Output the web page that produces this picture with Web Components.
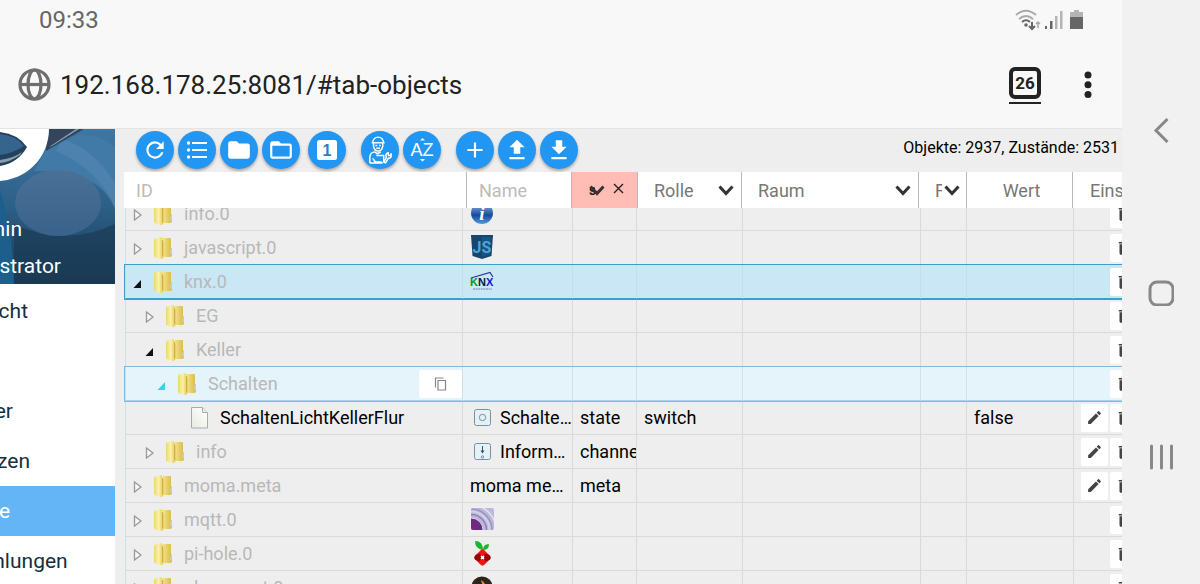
<!DOCTYPE html>
<html lang="de">
<head>
<meta charset="utf-8">
<meta name="viewport" content="width=device-width, initial-scale=1">
<title>ioBroker – Objekte</title>
<style>
  html, body { height: 100%; }
  body { margin: 0; overflow: hidden; background: #f8f8f8; font-family: Roboto, "Liberation Sans", sans-serif; }
</style>
</head>
<body>
<phone-screen>
  <status-bar slot="top" time="09:33"></status-bar>
  <address-bar slot="top" url="192.168.178.25:8081/#tab-objects" tabs="26"></address-bar>
  <side-drawer slot="drawer">
    <drawer-item href="#tab-info">Info</drawer-item>
  </side-drawer>
  <objects-panel></objects-panel>
  <nav-rail slot="nav"></nav-rail>
</phone-screen>

<script>
const define = (name, html, ready) => {
  const tpl = document.createElement('template');
  tpl.innerHTML = html;
  customElements.define(name, class extends HTMLElement {
    connectedCallback() {
      if (this.shadowRoot) return;
      this.attachShadow({ mode: 'open' }).append(tpl.content.cloneNode(true));
      if (ready) ready(this, this.shadowRoot);
    }
  });
};

/* ---------- frame ---------- */
define('phone-screen', `
<style>
  :host { display: grid; grid-template-columns: minmax(0, 1fr) 78px; height: 100vh; }
  main { display: flex; flex-direction: column; min-width: 0; min-height: 0; }
  .app { flex: 1; display: grid; grid-template-columns: 115px minmax(0, 1fr); gap: 9px; min-height: 0; background: #eee; border-top: 1px solid #e4e4e4; }
</style>
<main><slot name="top"></slot><div class="app"><slot name="drawer"></slot><slot></slot></div></main>
<slot name="nav"></slot>`);

define('status-bar', `
<style>
  :host { display: flex; justify-content: space-between; align-items: center; height: 40px; padding: 0 33px 0 39px; color: #666; font-size: 24px; }
  .icons { display: flex; gap: 4px; }
</style>
<span id="time"></span>
<span class="icons">
  <svg width="26" height="22" viewBox="0 0 26 22" fill="none" stroke-width="2">
    <path d="M1 6q10-8.500 20 0" stroke="#aaa"/><path d="M4 10q7-6 14 0" stroke="#aaa"/><path d="M7 13q4-3.500 8 0" stroke="#666"/>
    <circle cx="11" cy="16" r="1.800" fill="#666"/>
    <path d="M17 13v6m-3-2l3 3 3-3" stroke="#666"/><path d="M23 19v-6m-2 2l2-2 2 2" stroke="#aaa" stroke-width="1.500"/>
  </svg>
  <svg width="18" height="22" viewBox="0 0 18 22"><path d="M0 17h2v3H0zM5 12h2.500v8H5z" fill="#666"/><path d="M10 7h2.500v13H10zM15 2h2.500v18H15z" fill="#b4b4b4"/></svg>
  <svg width="22" height="22" viewBox="0 0 22 22"><path d="M7 1h5v2h4v6H3V3h4z" fill="#b4b4b4"/><path d="M3 8h13v12H3z" fill="#666"/></svg>
</span>`, (el, root) => { root.getElementById('time').textContent = el.getAttribute('time'); });

define('address-bar', `
<style>
  :host { display: flex; align-items: center; box-sizing: border-box; height: 88px; padding: 2px 26px 0 18px; gap: 9px; }
  svg, button { flex: none; }
  input { flex: 1; min-width: 0; border: 0; padding: 0; background: none; outline: 0; font: 26px Roboto, sans-serif; color: #222; }
  button { border: 0; background: none; padding: 0; display: grid; place-items: center; color: #222; }
  .tabs { width: 32px; height: 37px; margin-right: 30px; align-content: start; border-bottom: 2px solid #222; box-sizing: border-box; }
  .tabs span { box-sizing: border-box; width: 32px; height: 32px; border: 4px solid #222; border-radius: 6px; font: bold 17px/24px Roboto, sans-serif; text-align: center; }
</style>
<svg width="33" height="34" viewBox="0 0 33 34" fill="none" stroke="#6e6e6e" stroke-width="3.200"><circle cx="16.500" cy="16.500" r="14.500"/><ellipse cx="16.500" cy="16.500" rx="6.500" ry="14.500"/><path d="M2 16.500h29"/></svg>
<input id="url" aria-label="Adresse">
<button class="tabs" aria-label="Tabs"><span id="tabs"></span></button>
<button aria-label="Menü"><svg width="16" height="28" viewBox="0 0 16 28" fill="#222"><circle cx="8" cy="4" r="3.500"/><circle cx="8" cy="13.700" r="3.500"/><circle cx="8" cy="23.400" r="3.500"/></svg></button>`,
(el, root) => {
  root.getElementById('url').value = el.getAttribute('url');
  root.getElementById('tabs').textContent = el.getAttribute('tabs');
});

define('nav-rail', `
<style>
  :host { display: flex; flex-direction: column; justify-content: space-between; align-items: center; padding: 20vh 0 114px; background: #f1f1f1; }
  button { border: 0; padding: 0; background: none; display: block; }
  svg { display: block; }
</style>
<button aria-label="Zurück"><svg width="26" height="26" viewBox="0 0 26 26" fill="none" stroke="#888" stroke-width="3"><path d="M19.500 2L8 13.500l11.500 11.500"/></svg></button>
<button aria-label="Start"><svg width="26" height="26" viewBox="0 0 26 26" fill="none" stroke="#888" stroke-width="3"><rect x="2" y="2" width="23" height="23" rx="7"/></svg></button>
<button aria-label="Übersicht"><svg width="26" height="26" viewBox="0 0 26 26" stroke="#888" stroke-width="3" stroke-linecap="round"><path d="M3.500 2v22M13.500 2v22M23.500 2v22"/></svg></button>`);

/* ---------- drawer ---------- */
define('drawer-item', `
<style>
  :host { display: block; }
  a { display: block; padding-left: 84px; font-size: 21px; line-height: 50px; color: #123042; text-decoration: none; }
  :host([active]) a { background: #64b5f6; color: #fff; }
</style>
<a><slot></slot></a>`, (el, root) => { root.querySelector('a').href = el.getAttribute('href'); });

define('side-drawer', `
<style>
  :host { display: flex; justify-content: flex-end; overflow: hidden; background: #fff; }
  .drawer { flex: none; width: 260px; }
  .user { display: grid; justify-items: end; height: 155px; margin-bottom: 2px; background: #174a72; color: #fff; font-size: 21px; }
  .user > * { grid-area: 1 / 1; }
  .user div { align-self: end; padding-bottom: 5px; text-align: right; }
  p { margin: 0; line-height: 25px; padding: 0 54px 0 0; }
  p.name { padding: 0 93px 12px 0; }
</style>
<div class="drawer">
  <div class="user">
    <svg width="115" height="155" viewBox="0 0 115 155" aria-hidden="true">
      <defs>
        <linearGradient id="bg" x1="0" y1="0" x2="0" y2="1"><stop offset="0" stop-color="#3f77a4"/><stop offset=".5" stop-color="#2c6088"/><stop offset="1" stop-color="#193850"/></linearGradient>
        <linearGradient id="disc" x1="0" y1="0" x2="0" y2="1"><stop offset="0" stop-color="#4a7096"/><stop offset="1" stop-color="#3a628a"/></linearGradient>
      </defs>
      <rect width="115" height="155" fill="url(#bg)"/>
      <path d="M50 14Q90-4 115 18V80Q100 40 34 42z" fill="#427aa7"/>
      <path d="M62 10q30 8 53 44v24Q98 40 56 22z" fill="#4c82ad"/>
      <path d="M46 22L84 0H48z" fill="#33455c"/><path d="M49 18L76 0h3L52 17z" fill="#86a2bb"/>
      <path d="M0 60q14 50 14 95H0z" fill="#1c5f8c"/>
      <path d="M14 95q50 24 101 0v60H14z" fill="#1b3b55" opacity=".7"/>
      <ellipse cx="58" cy="74" rx="43" ry="33" fill="url(#disc)"/>
      <circle cx="-3" cy="0" r="52" fill="#fff"/>
      <path d="M0 3q18 2 27 15Q18 34 0 37z" fill="#23415c"/><path d="M0 5q15 1 24 12Q14 24 0 26z" fill="#35648d"/><path d="M0 31q14-2 22-8l-2 3Q10 33 0 34z" fill="#8a9cab"/>
    </svg>
    <div><p class="name">Admin</p><p>Administrator</p></div>
  </div>
  <nav>
    <drawer-item href="#tab-intro">Übersicht</drawer-item>
    <slot></slot>
    <drawer-item href="#tab-adapters">Adapter</drawer-item>
    <drawer-item href="#tab-instances">Instanzen</drawer-item>
    <drawer-item href="#tab-objects" active>Objekte</drawer-item>
    <drawer-item href="#tab-enums">Aufzählungen</drawer-item>
  </nav>
</div>`);

/* ---------- toolbar ---------- */
define('round-button', `
<style>
  :host { display: block; }
  button { display: grid; place-items: center; width: 38px; height: 38px; padding: 0; border: 0; border-radius: 50%; background: #2196f3; box-shadow: 0 2px 3px rgba(90, 50, 40, .4); }
</style>
<button><slot></slot></button>`, (el, root) => { root.querySelector('button').setAttribute('aria-label', el.getAttribute('label')); });

define('objects-toolbar', `
<style>
  :host { display: flex; align-items: flex-start; justify-content: space-between; height: 41px; padding: 2px 3px 0 12px; }
  .buttons { display: flex; gap: 15px; }
  .group { display: flex; gap: 4px; }
  .group .apart { margin-left: 4px; }
  svg { display: block; }
  .count { font-size: 16px; line-height: 34px; color: #000; white-space: nowrap; }
</style>
<div class="buttons">
  <div class="group">
    <round-button label="Aktualisieren"><svg width="26" height="26" viewBox="0 0 24 24" fill="#fff"><path d="M17.650 6.350A7.960 7.960 0 0 0 12 4a8 8 0 1 0 7.730 10h-2.080A6 6 0 1 1 12 6c1.660 0 3.140.690 4.220 1.780L13 11h7V4z"/></svg></round-button>
    <round-button label="Liste"><svg width="24" height="20" viewBox="0 0 24 20" fill="#fff"><path d="M7 2h15v2H7zM7 9h15v2H7zM7 16h15v2H7z"/><circle cx="3.500" cy="3" r="1.700"/><circle cx="3.500" cy="10" r="1.700"/><circle cx="3.500" cy="17" r="1.700"/></svg></round-button>
    <round-button label="Zuklappen"><svg width="26" height="26" viewBox="0 0 24 24" fill="#fff"><path d="M10 4H4a2 2 0 0 0-2 2v12c0 1.100.9 2 2 2h16a2 2 0 0 0 2-2V8a2 2 0 0 0-2-2h-8z"/></svg></round-button>
    <round-button label="Aufklappen"><svg width="26" height="26" viewBox="0 0 24 24" fill="#fff"><path d="M20 6h-8l-2-2H4a2 2 0 0 0-2 2v12c0 1.100.9 2 2 2h16a2 2 0 0 0 2-2V8a2 2 0 0 0-2-2zm0 12H4V8h16z"/></svg></round-button>
    <round-button class="apart" label="Eine Ebene"><svg width="20" height="20" viewBox="0 0 20 20"><rect width="20" height="20" rx="2.500" fill="#fff"/><text x="10" y="15.500" text-anchor="middle" font-size="16" font-weight="700" fill="#2a7fc4">1</text></svg></round-button>
  </div>
  <div class="group">
    <round-button label="Expertenmodus"><svg width="24" height="29" viewBox="0 0 26 31" fill="none" stroke="#fff" stroke-width="1.600" stroke-linejoin="round"><path d="M5 7q1-6 6-6t6 6M4 7h14M6 7v4q1 5 5 5t5-5V7"/><path d="M8 10h2m2 0h2M9 13h4M2 29v-6q0-5 5-6l3 2 4-2M2 29h14M9 21h8v7M5 24l3 4h7"/><path d="M17 28l3-5q-2-4 2-5v3h2l1-2q1 5-3 5l-3 5z"/></svg></round-button>
    <round-button label="Sortieren"><svg width="26" height="26" viewBox="0 0 26 26" fill="#fff"><text x="13" y="19" text-anchor="middle" font-size="18">AZ</text><path d="M11 3.500h5L13.500 1zM11 22h5l-2.500 2.500z"/></svg></round-button>
  </div>
  <div class="group">
    <round-button label="Neu"><svg width="26" height="26" viewBox="0 0 24 24" fill="#fff"><path d="M19 13h-6v6h-2v-6H5v-2h6V5h2v6h6z"/></svg></round-button>
    <round-button label="Hochladen"><svg width="26" height="26" viewBox="0 0 24 24" fill="#fff"><path d="M9 15.500h6v-6h4l-7-7-7 7h4zM5 18.500h14v2H5z"/></svg></round-button>
    <round-button label="Herunterladen"><svg width="26" height="26" viewBox="0 0 24 24" fill="#fff"><path d="M19 9h-4V3H9v6H5l7 7zM5 18.500v2h14v-2z"/></svg></round-button>
  </div>
</div>
<span class="count">Objekte: 2937, Zustände: 2531</span>`);

/* ---------- column header ---------- */
define('filter-select', `
<style>
  :host { display: grid; align-items: center; flex: 1; min-width: 0; padding: 0 7px 0 16px; }
  select, svg { grid-area: 1 / 1; }
  select { appearance: none; width: 100%; height: 35px; padding: 0; border: 0; background: none; font: 18px Roboto, sans-serif; color: #777; overflow: hidden; text-overflow: clip; }
  svg { justify-self: end; pointer-events: none; }
  :host([compact]) { padding-right: 6px; }
  :host([compact]) select { padding-right: 18px; }
  :host([tiny]) { flex: none; width: 15px; padding: 0; }
  :host([tiny]) select { font-size: 14px; font-weight: 700; color: #222; height: 20px; padding-right: 10px; }
</style>
<select><option></option></select>
<svg width="16" height="11" viewBox="0 0 16 11" fill="none" stroke="#333" stroke-width="3"><path d="M1.500 1.500L8 8.500l6.500-7"/></svg>`,
(el, root) => {
  root.querySelector('option').textContent = el.getAttribute('value');
  root.querySelector('select').setAttribute('aria-label', el.getAttribute('label') || el.getAttribute('value'));
});

define('objects-header', `
<style>
  :host { display: grid; grid-template-columns: 343px 105px 66px 104px minmax(0, 1fr) 48px 106px 120px; height: 36px; width: calc(100% + 71px); background: #fff; color: #777; font-size: 18px; }
  .col { display: flex; align-items: center; min-width: 0; box-sizing: border-box; border-right: 1px solid #bbb; overflow: hidden; }
  input { width: 100%; border: 0; outline: 0; background: none; padding: 0 12px; font: 18px Roboto, sans-serif; }
  input::placeholder { color: #bbb; opacity: 1; }
  .active { background: #ffbdb5; gap: 6px; padding-left: 17px; }
  .active button { border: 0; background: none; padding: 0; width: 16px; height: 24px; display: grid; align-content: start; padding-top: 5px; justify-content: center; }
  .wert { justify-content: center; padding-left: 4px; }
  .last { padding-left: 17px; }
</style>
<div class="col"><input placeholder="ID" aria-label="ID"></div>
<div class="col"><input placeholder="Name" aria-label="Name"></div>
<div class="col active"><filter-select tiny value="state" label="Typ"></filter-select><button aria-label="Filter löschen"><svg width="11" height="11" viewBox="0 0 11 11" stroke="#222" stroke-width="1.400"><path d="M1 1l9 9M10 1l-9 9"/></svg></button></div>
<div class="col"><filter-select value="Rolle"></filter-select></div>
<div class="col"><filter-select value="Raum"></filter-select></div>
<div class="col"><filter-select compact value="Funktion"></filter-select></div>
<div class="col wert">Wert</div>
<div class="col last">Einstellungen</div>`);

/* ---------- object tree ---------- */
const pictures = {
  closed: `<svg width="10" height="14" viewBox="0 0 10 14" fill="#f8f8f8" stroke="#999" stroke-width="1.300"><path d="M1.500 3L8 8l-6.500 5z"/></svg>`,
  open: `<svg width="10" height="14" viewBox="0 0 10 14" fill="currentColor"><path d="M8 5v8H.5z"/></svg>`,
  folder: `<svg width="20" height="24" viewBox="0 0 20 24"><defs><linearGradient id="fl" x1="0" x2="1"><stop offset="0" stop-color="#ecd76c"/><stop offset=".5" stop-color="#fbf2ac"/><stop offset="1" stop-color="#dfc252"/></linearGradient><linearGradient id="fr" x1="0" x2="1"><stop offset="0" stop-color="#f7e78c"/><stop offset="1" stop-color="#d9b748"/></linearGradient></defs><path d="M8 3q0-1 1-1h7q1 0 1 1v9l1 1v6q0 2-2 2H8z" fill="url(#fr)"/><path d="M0 4q0-1 1-1.200L6 1q2 0 2 1v3l1.500 1v14q0 3-2.500 3-5-1-7-2.500z" fill="url(#fl)"/><path d="M8.500 4v16" stroke="#c9a640" stroke-width=".8"/><path d="M16 14l2-1v5l-2 1z" fill="#c4d4a8"/></svg>`,
  file: `<svg width="20" height="24" viewBox="0 0 20 24"><defs><linearGradient id="pg" x1="0" y1="1" x2="1" y2="0"><stop offset="0" stop-color="#e6ece0"/><stop offset="1" stop-color="#fff"/></linearGradient></defs><path d="M1.500 1.500h11l5 5v15.500h-16z" fill="url(#pg)" stroke="#aaa"/><path d="M12.500 1.500v5h5" fill="#eee" stroke="#aaa"/></svg>`,
  info: `<svg width="24" height="24" viewBox="0 0 24 24"><defs><linearGradient id="ib" x1="0" y1="0" x2="0" y2="1"><stop offset="0" stop-color="#9bc4ee"/><stop offset=".6" stop-color="#174a9a"/><stop offset="1" stop-color="#4f9ae0"/></linearGradient></defs><circle cx="12" cy="11" r="11" fill="url(#ib)"/><text x="12" y="18" text-anchor="middle" font-family="Liberation Serif" font-weight="700" font-style="italic" font-size="19" fill="#fff">i</text></svg>`,
  js: `<svg width="24" height="26" viewBox="0 0 24 26"><path d="M1 0h22l-1.500 21-9.500 3L2.500 21z" fill="#17456b"/><path d="M12 2h9l-1.500 17.500-7.500 2.500z" fill="#1c5480"/><text x="12" y="17.500" text-anchor="middle" font-weight="700" font-size="16" fill="#4aa3dc">JS</text></svg>`,
  knx: `<svg width="24" height="22" viewBox="0 0 24 22"><path d="M1 7L20 1.500 23 6" fill="none" stroke="#2233a8" stroke-width="1.200"/><g font-family="Liberation Sans" font-weight="700" font-size="11"><text x="0" y="15" fill="#0a9a10">K</text><text x="8" y="15" fill="#0d1440">N</text><text x="16" y="15" fill="#1414d0">X</text></g><path d="M3 18h19" stroke="#6a84b8" stroke-dasharray="2 .6"/></svg>`,
  mqtt: `<svg width="24" height="24" viewBox="0 0 24 24"><defs><clipPath id="mq"><rect x="1" y="0" width="23" height="22" rx="2"/></clipPath></defs><g clip-path="url(#mq)"><rect width="24" height="24" fill="#b9b9da"/><g fill="none"><circle cx="1" cy="22" r="25" stroke="#e2e0ee" stroke-width="1.500"/><circle cx="1" cy="22" r="21" stroke="#9a96c4" stroke-width="1.500"/><circle cx="1" cy="22" r="18.500" stroke="#d4d0e8" stroke-width="2"/><circle cx="1" cy="22" r="15.500" stroke="#8f83b8" stroke-width="1.500"/></g><circle cx="1" cy="22" r="12" fill="#6d2a80" stroke="#d9d4e8"/></g></svg>`,
  pihole: `<svg width="24" height="26" viewBox="0 0 24 26"><path d="M5 0q8 0 8 9Q5 8 5 0zM19 3q0 6-6 6 0-6 6-6z" fill="#18b82c"/><rect x="6" y="10" width="13" height="13" rx="3" transform="rotate(45 12.500 16.500)" fill="#f01414"/><path d="M12.500 16.500l3.500-4 4 2q1 2 0 4l-4 2zM12.500 16.500l-3.500-4-4 2q-1 2 0 4l4 2z" fill="#960404"/><path d="M11 15l1.500.5 1.500-.5-.5 1.500.5 1.500-1.500-.5-1.500.5.5-1.500z" fill="#fff" stroke="#fff"/></svg>`,
  dark: `<svg width="24" height="24" viewBox="0 0 24 24"><circle cx="12" cy="11" r="10.500" fill="#2b241c"/><path d="M11 4q4 2 5 7l-4 8-3-5 4-3z" fill="#e0932c"/></svg>`,
  state: `<svg class="small" width="18" height="18" viewBox="0 0 18 18" fill="#e4f1f7" stroke="#7592a0"><rect x=".5" y=".5" width="16" height="16" rx="2"/><circle cx="8.500" cy="8.500" r="3.200"/></svg>`,
  channel: `<svg class="small" width="18" height="18" viewBox="0 0 18 18" fill="#e4f1f7" stroke="#7592a0"><rect x=".5" y=".5" width="16" height="16" rx="2"/><path d="M8.500 3v6" stroke="#39515e"/><path d="M6.500 7.500h4L8.500 10.500z" fill="#39515e" stroke="none"/><circle cx="8.500" cy="14" r="1.200"/></svg>`,
  copy: `<svg width="14" height="14" viewBox="0 0 14 14" fill="none" stroke="#888" stroke-width="1.200"><path d="M4 3.500h7.500v9.500H4z"/><path d="M1.500 10.500V1h8"/></svg>`,
  pen: `<svg width="17" height="17" viewBox="0 0 24 24" fill="#444"><path d="M3 17.250V21h3.750L17.810 9.940l-3.750-3.750zM20.710 7.040a1 1 0 0 0 0-1.410l-2.340-2.340a1 1 0 0 0-1.410 0l-1.830 1.830 3.750 3.750z"/></svg>`,
  bin: `<svg width="18" height="18" viewBox="0 0 24 24" fill="#444"><path d="M6 19c0 1.100.9 2 2 2h8a2 2 0 0 0 2-2V7H6zM19 4h-3.500l-1-1h-5l-1 1H5v2h14z"/></svg>`
};

const objects = [
  { id: 'info.0', pic: 'info' },
  { id: 'javascript.0', pic: 'js' },
  { id: 'knx.0', pic: 'knx', open: true, cls: 'selected' },
  { id: 'EG', level: 1 },
  { id: 'Keller', level: 1, open: true },
  { id: 'Schalten', level: 2, open: true, cls: 'hover', copy: true },
  { id: 'SchaltenLichtKellerFlur', level: 3, leaf: true, pic: 'state', name: 'SchaltenLicht', type: 'state', role: 'switch', value: 'false', edit: true },
  { id: 'info', level: 1, pic: 'channel', name: 'Information', type: 'channel', edit: true },
  { id: 'moma.meta', name: 'moma meta data', type: 'meta', edit: true },
  { id: 'mqtt.0', pic: 'mqtt' },
  { id: 'pi-hole.0', pic: 'pihole' },
  { id: 'placement.0', pic: 'dark' }
];

const row = o => `
<tr class="${o.cls || ''}">
  <td><div class="id ${o.leaf ? 'leaf' : ''}" style="--level:${o.level || 0}">
    <span class="exp">${o.leaf ? '' : pictures[o.open ? 'open' : 'closed']}</span>${pictures[o.leaf ? 'file' : 'folder']}
    <span class="label">${o.id}</span>${o.copy ? `<button class="copy" aria-label="Kopieren">${pictures.copy}</button>` : ''}
  </div></td>
  <td><div class="name ${o.pic ? '' : 'plain'}">${o.pic ? pictures[o.pic] : ''}${o.name ? `<span>${o.name}</span>` : ''}</div></td>
  <td>${o.type || ''}</td><td>${o.role || ''}</td><td></td><td></td><td>${o.value || ''}</td>
  <td><div class="tools">${o.edit ? `<button aria-label="Bearbeiten">${pictures.pen}</button>` : ''}<button class="del" aria-label="Löschen">${pictures.bin}</button></div></td>
</tr>`;

define('object-tree', `
<style>
  :host { display: block; flex: 1; min-height: 0; overflow: hidden; padding-left: 1px; }
  table { table-layout: fixed; border-collapse: separate; border-spacing: 0; width: calc(100% + 71px); font-size: 18px; color: #000; }
  td { box-sizing: border-box; height: 34px; padding: 0 0 0 7px; border: solid #dadada; border-width: 0 0 1px 1px; overflow: hidden; white-space: nowrap; line-height: 32px; }
  td:first-child { border-left-color: #cfe0e8; }
  tr.selected, tr.hover { outline: 1px solid #3d9fc8; }
  tr.selected { background: #c9e7f5; }
  tr.hover { background: #e5f3fa; outline-color: #7fbad6; }
  tr.selected td { border-color: #c6dde8; border-bottom-color: #3d9fc8; }
  tr.hover td { border-color: #d2e0e8; border-bottom-color: #a8d2e5; }
  svg { display: block; flex: none; }
  .id { display: flex; align-items: center; height: 33px; padding-left: calc(var(--level) * 12px); color: #b8b8b8; }
  .leaf { color: #000; }
  .exp { width: 10px; margin-right: 11px; color: #111; }
  .hover .exp { color: #2fd8ea; }
  .label { flex: 1; margin-left: 10px; line-height: 32px; }
  .name { display: flex; align-items: center; gap: 8px; height: 33px; }
  .name span { overflow: hidden; text-overflow: ellipsis; }
  .plain { padding-right: 6px; }
  .small { margin-left: 4px; }
  .tools { display: grid; grid-template-columns: 27px 40px; gap: 2px; }
  .tools button, .copy { display: grid; place-items: center start; height: 28px; padding: 0 5px; border: 0; border-radius: 2px; background: #fff; }
  .tools .del { grid-column: 2; }
  .copy { width: 43px; place-items: center; }
</style>
<table aria-label="Objekte">
  <colgroup><col style="width:337px"><col style="width:110px"><col style="width:64px"><col style="width:106px"><col><col style="width:46px"><col style="width:107px"><col style="width:120px"></colgroup>
  <tbody></tbody>
</table>`, (el, root) => {
  root.querySelector('tbody').innerHTML = objects.map(row).join('');
  el.scrollTop = 11;
  requestAnimationFrame(() => { el.scrollTop = 11; });
});

define('objects-panel', `
<style>
  :host { display: flex; flex-direction: column; min-width: 0; min-height: 0; overflow: hidden; }
  objects-toolbar, objects-header { flex: none; }
</style>
<objects-toolbar></objects-toolbar>
<objects-header></objects-header>
<object-tree></object-tree>`);
</script>
</body>
</html>
